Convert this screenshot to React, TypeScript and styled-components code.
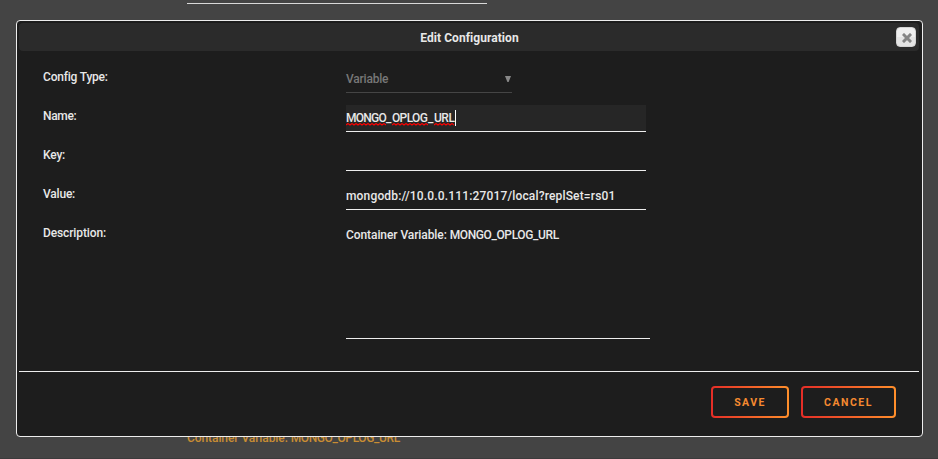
import React from "react";
import styled, { createGlobalStyle } from "styled-components";

const GlobalStyle = createGlobalStyle`
  * { box-sizing: border-box; }
  body {
    margin: 0;
    background: #444;
    overflow: hidden;
    font-family: Roboto, "Liberation Sans", sans-serif;
    font-size: 12px;
    font-weight: 500;
    color: #e8e8e8;
  }
`;

const Page = styled.div`
  position: relative;
  display: flex;
  flex-direction: column;
  justify-content: space-between;
  width: 938px;
  height: 459px;
  padding-left: 187px;
  overflow: hidden;
  background: #444;
  border-bottom: 1px solid #3c3b3c;
`;

const PageField = styled.div`
  width: 300px;
  height: 4px;
  border-bottom: 1px solid #d8d8d8;
`;

const PageText = styled.div`
  height: 28px;
  line-height: 16px;
  color: #c98d33;
`;

const Dialog = styled.section`
  position: absolute;
  left: 16px;
  top: 20px;
  display: flex;
  flex-direction: column;
  width: 907px;
  height: 417px;
  padding: 2px;
  border: 1px solid #eee;
  border-radius: 4px;
  background: #1d1d1d;
`;

const Header = styled.header`
  display: grid;
  grid-template-columns: 1fr auto 1fr;
  align-items: center;
  width: 900px;
  height: 28px;
  padding: 0 3px 0 4px;
  border-radius: 4px;
  background: #2b2b2b;
`;

const Title = styled.h1`
  grid-column: 2;
  margin: 0;
  padding-top: 2px;
  font-size: 12px;
  font-weight: 700;
  line-height: 16px;
`;

const CloseButton = styled.button`
  justify-self: end;
  display: flex;
  align-items: center;
  justify-content: center;
  width: 20px;
  height: 20px;
  padding: 1px 0 0 1px;
  border: 1px solid #d3d3d3;
  border-radius: 4px;
  background: linear-gradient(#efefef 50%, #e4e4e4 50%);
`;

const Form = styled.div`
  display: flex;
  flex-direction: column;
  gap: 12px;
  height: 320px;
  padding: 15px 0 0 24px;
`;

const Row = styled.div`
  display: grid;
  grid-template-columns: 303px auto;
  justify-content: start;
`;

const Text = styled.span<{ $spacing?: number }>`
  letter-spacing: ${(p) => p.$spacing ?? 0}px;
  white-space: nowrap;
`;

const Label = styled.label`
  padding-top: 3px;
  line-height: 16px;
`;

const Field = styled.div<{ $width?: number; $height?: number; $active?: boolean; $disabled?: boolean }>`
  display: flex;
  align-items: flex-start;
  justify-content: space-between;
  width: ${(p) => p.$width ?? 300}px;
  height: ${(p) => p.$height ?? 27}px;
  padding-top: 5px;
  line-height: 16px;
  border-bottom: 1px solid ${(p) => (p.$disabled ? "#454545" : "#eee")};
  background: ${(p) => (p.$active ? "#262626" : "transparent")};
  color: ${(p) => (p.$disabled ? "#777" : "#e8e8e8")};
`;

const Editing = styled.div`
  display: flex;
  align-items: flex-start;
`;

const Word = styled.span<{ $width: number }>`
  position: relative;
  display: inline-block;
  width: ${(p) => p.$width}px;
`;

const Squiggle = styled.svg`
  position: absolute;
  left: 0;
  bottom: 0;
`;

const Caret = styled.i`
  width: 1px;
  height: 16px;
  background: #fff;
`;

const Arrow = styled.svg`
  margin: 5px 1px 0 0;
`;

const Footer = styled.footer`
  display: flex;
  justify-content: flex-end;
  gap: 12px;
  width: 900px;
  padding: 14px 23px 0 0;
  border-top: 1px solid #eee;
`;

const ActionButton = styled.button<{ $width: number }>`
  width: ${(p) => p.$width}px;
  height: 32px;
  padding: 0;
  border: 2px solid transparent;
  border-radius: 4px;
  background:
    linear-gradient(#1d1d1d, #1d1d1d) padding-box,
    linear-gradient(90deg, #e52d27, #ff8f2b) border-box;
  color: #f58a30;
  font: 700 10.5px "Roboto", sans-serif;
`;

function Misspelled({ text, width, spacing }: { text: string; width: number; spacing: number }) {
  const points = Array.from({ length: Math.floor(width / 2) + 1 }, (_, i) => `${i * 2},${i % 2 ? 0.5 : 2}`).join(" ");
  return (
    <Word $width={width}>
      <Text $spacing={spacing}>{text}</Text>
      <Squiggle width={width} height="3">
        <polyline points={points} fill="none" stroke="#ff0000" strokeWidth="1.1" />
      </Squiggle>
    </Word>
  );
}

function ContainerVariable() {
  return (
    <Text $spacing={-0.08}>
      Container Variable: <Text $spacing={-0.38}>MONGO_OPLOG_URL</Text>
    </Text>
  );
}

export default function App() {
  return (
    <>
      <GlobalStyle />
      <Page>
        <PageField />
        <PageText>
          <ContainerVariable />
        </PageText>
        <Dialog role="dialog">
          <Header>
            <Title><Text $spacing={0.06}>Edit Configuration</Text></Title>
            <CloseButton aria-label="Close">
              <svg width="10" height="10" viewBox="0 0 10 10">
                <path d="M2 2L8 8M8 2L2 8" stroke="#858585" strokeWidth="3" strokeLinecap="square" />
              </svg>
            </CloseButton>
          </Header>
          <Form>
            <Row>
              <Label><Text $spacing={-0.2}>Config Type:</Text></Label>
              <Field $width={166} $disabled>
                <Text $spacing={-0.2}>Variable</Text>
                <Arrow width="6" height="6"><path d="M0 0H6L3.6 6H2.4Z" fill="#888" /></Arrow>
              </Field>
            </Row>
            <Row>
              <Label><Text $spacing={-0.35}>Name:</Text></Label>
              <Field $active>
                <Editing>
                  <Misspelled text="MONGO" width={40} spacing={-0.75} />
                  <Word $width={6}><Text>_</Text></Word>
                  <Misspelled text="OPLOG" width={36} spacing={-0.65} />
                  <Word $width={6}><Text>_</Text></Word>
                  <Misspelled text="URL" width={21} spacing={-0.5} />
                  <Caret />
                </Editing>
              </Field>
            </Row>
            <Row>
              <Label><Text $spacing={-0.2}>Key:</Text></Label>
              <Field />
            </Row>
            <Row>
              <Label><Text $spacing={-0.2}>Value:</Text></Label>
              <Field><Text $spacing={0.16}>mongodb://10.0.0.111:27017/local?replSet=rs01</Text></Field>
            </Row>
            <Row>
              <Label><Text $spacing={-0.12}>Description:</Text></Label>
              <Field $width={304} $height={117}><ContainerVariable /></Field>
            </Row>
          </Form>
          <Footer>
            <ActionButton $width={78}><Text $spacing={1.4}>SAVE</Text></ActionButton>
            <ActionButton $width={95}><Text $spacing={1.5}>CANCEL</Text></ActionButton>
          </Footer>
        </Dialog>
      </Page>
    </>
  );
}
